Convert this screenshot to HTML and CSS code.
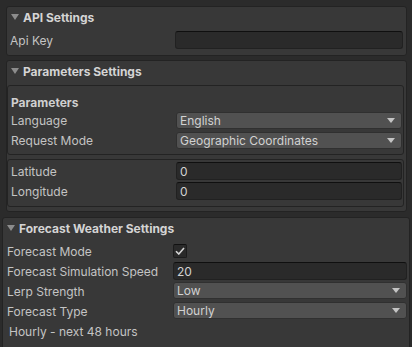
FILE: index.html
```html
<!DOCTYPE html>
<html>
<head>
<meta charset="utf-8">
<link rel="stylesheet" href="styles.css">
</head>
<body>
<div class="page">
  <section class="box box-api">
    <div class="head"><svg class="fold" width="8" height="6" viewBox="0 0 8 6"><path d="M0 0H8L4 6Z"/></svg><span>API Settings</span></div>
    <div class="row"><span class="label">Api Key</span><div class="field"></div></div>
  </section>

  <section class="box box-params">
    <div class="head"><svg class="fold" width="8" height="6" viewBox="0 0 8 6"><path d="M0 0H8L4 6Z"/></svg><span>Parameters Settings</span></div>
    <div class="inner inner-a">
      <div class="row"><span class="label bold">Parameters</span></div>
      <div class="row"><span class="label">Language</span><div class="drop"><span>English</span><svg class="arrow" width="8" height="5" viewBox="0 0 8 5"><path d="M0 0H8L4 5Z"/></svg></div></div>
      <div class="row"><span class="label">Request Mode</span><div class="drop"><span>Geographic Coordinates</span><svg class="arrow" width="8" height="5" viewBox="0 0 8 5"><path d="M0 0H8L4 5Z"/></svg></div></div>
    </div>
    <div class="inner inner-b">
      <div class="row"><span class="label">Latitude</span><div class="field"><span>0</span></div></div>
      <div class="row"><span class="label">Longitude</span><div class="field"><span>0</span></div></div>
    </div>
  </section>

  <section class="box box-forecast">
    <div class="head"><svg class="fold" width="8" height="6" viewBox="0 0 8 6"><path d="M0 0H8L4 6Z"/></svg><span>Forecast Weather Settings</span></div>
    <div class="row"><span class="label">Forecast Mode</span><div class="check"><svg width="10" height="8" viewBox="0 0 10 8"><path d="M1 4.2L3.8 7L9 1" fill="none" stroke="#d6d6d6" stroke-width="1.6"/></svg></div></div>
    <div class="row"><span class="label">Forecast Simulation Speed</span><div class="field"><span>20</span></div></div>
    <div class="row"><span class="label">Lerp Strength</span><div class="drop"><span>Low</span><svg class="arrow" width="8" height="5" viewBox="0 0 8 5"><path d="M0 0H8L4 5Z"/></svg></div></div>
    <div class="row"><span class="label">Forecast Type</span><div class="drop"><span>Hourly</span><svg class="arrow" width="8" height="5" viewBox="0 0 8 5"><path d="M0 0H8L4 5Z"/></svg></div></div>
    <div class="row note"><span>Hourly - next 48 hours</span></div>
  </section>
</div>
</body>
</html>
```

FILE: styles.css
```css
* { box-sizing: border-box; }
html, body { margin: 0; padding: 0; }
body {
  background: #2b2b2b;
  font-family: Inter, "Noto Sans", sans-serif;
  font-size: 12px;
  color: #c4c4c4;
  width: 412px;
  height: 347px;
  overflow: hidden;
}
.page {
  padding-top: 6px;
  display: flex;
  flex-direction: column;
}
.box {
  background: #383838;
  border: 1px solid #232323;
  border-radius: 3px;
}
.box-api {
  margin: 0 5px 0 6px;
  height: 50px;
  padding: 0 3px 0 3px;
}
.box-params {
  margin: 4px 5px 0 6px;
  height: 152px;
  padding: 0 1px 0 0;
}
.box-forecast {
  margin: 5px 2px 0 2px;
  height: 140px;
  padding: 0 2px 0 4px;
}
.head {
  height: 20px;
  display: flex;
  align-items: center;
  gap: 4px;
  padding-left: 1px;
  font-weight: 700;
  color: #d4d4d4;
  font-size: 12px;
}
.box-params .head { padding-left: 4px; }
.box-forecast .head { padding-left: 0; }
.fold { fill: #8c8c8c; flex: none; }
.row {
  display: flex;
  align-items: center;
  height: 18px;
}
.box-api .row { margin-top: 4px; }
.label {
  flex: none;
  white-space: nowrap;
}
.bold { font-weight: 700; color: #cfcfcf; }
.box-api .label { width: 165px; }
.inner {
  background: #383838;
  border: 1px solid #232323;
  border-radius: 3px;
  margin-right: 1px;
  padding: 0 1px 0 3px;
}
.inner .label { width: 165px; }
.inner-a {
  margin-top: 4px;
  height: 70px;
  padding-top: 7px;
}
.inner-a .row + .row + .row { margin-top: 2px; }
.inner-b {
  margin-top: 4px;
  height: 48px;
  padding-top: 2px;
}
.inner-b .row + .row { margin-top: 2px; }
.field {
  flex: 1;
  height: 18px;
  background: #2a2a2a;
  border: 1px solid #212121;
  border-top-color: #0f0f0f;
  border-radius: 3px;
  display: flex;
  align-items: center;
  padding-left: 3px;
  color: #d2d2d2;
}
.drop {
  flex: 1;
  height: 17px;
  background: #515151;
  border: 1px solid #303030;
  border-radius: 3px;
  display: flex;
  align-items: center;
  justify-content: space-between;
  padding: 0 6px 0 3px;
  color: #d2d2d2;
}
.arrow { fill: #c4c4c4; flex: none; }
.box-forecast .label { width: 166px; }
.box-forecast .row { margin-top: 2px; }
.box-forecast .head + .row { margin-top: 4px; }
.box-forecast .drop { align-self: flex-start; }
.check {
  width: 14px;
  height: 14px;
  background: #2a2a2a;
  border: 1px solid #1c1c1c;
  border-top-color: #111;
  border-radius: 2px;
  display: flex;
  align-items: center;
  justify-content: center;
}
.note { padding-left: 2px; }
```
